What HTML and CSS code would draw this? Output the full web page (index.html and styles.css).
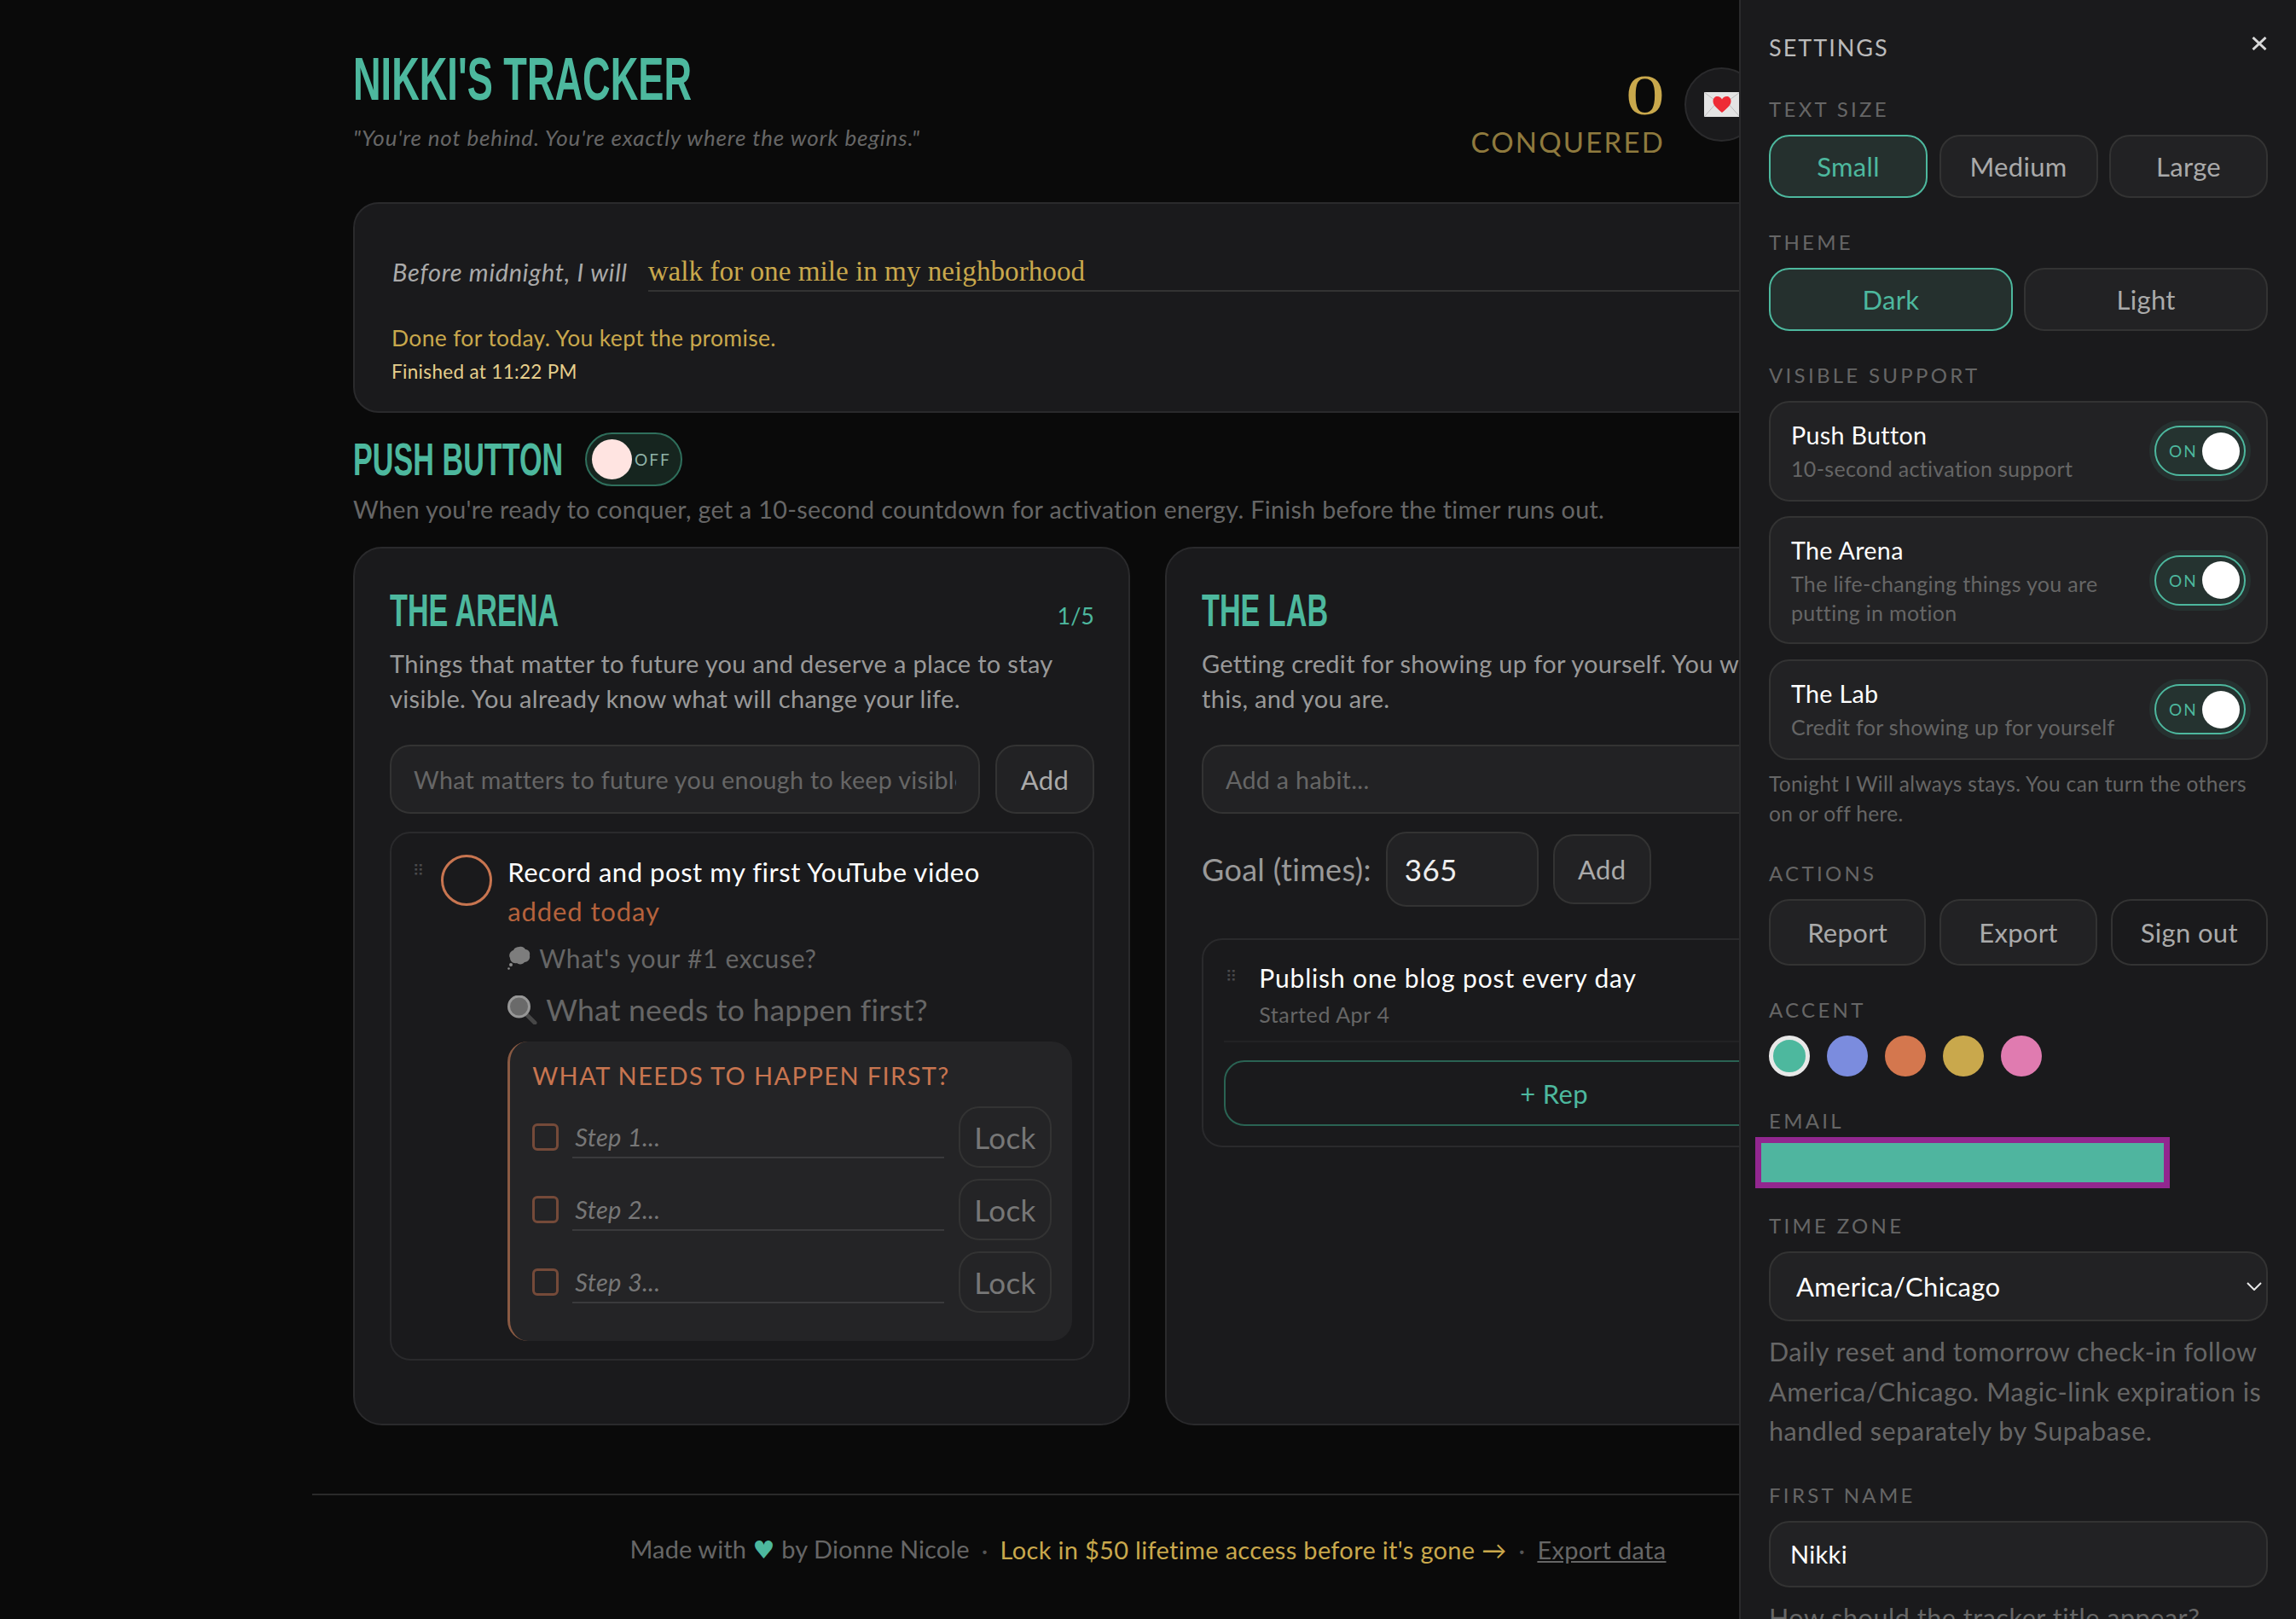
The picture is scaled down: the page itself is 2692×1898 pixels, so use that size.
FILE: index.html
```html
<!DOCTYPE html>
<html lang="en">
<head>
    <meta charset="UTF-8">
    <title>Nikki's Tracker</title>
    <link rel="stylesheet" href="styles.css">
</head>
<body>
    <div class="page">
        <header class="header">
            <div class="brand">
                <h1 class="title">NIKKI'S TRACKER</h1>
                <p class="quote">"You're not behind. You're exactly where the work begins."</p>
            </div>
            <div class="header-right">
                <div class="count">
                    <div class="count-num"><span>0</span></div>
                    <div class="count-label">CONQUERED</div>
                </div>
                <button class="letter-btn" aria-label="Letter">
                    <svg width="42" height="29" viewBox="0 0 42 29">
                        <rect width="42" height="29" rx="1" fill="#e4e4e4"/>
                        <path d="M0 0L21 16L42 0M0 29L15 12M42 29L27 12" fill="none" stroke="#bdbdbd" stroke-width="1"/>
                        <path d="M21 24C14 18 10.500 15 10.500 10.500C10.500 7 13 5 15.500 5C18 5 20 6.500 21 8.500C22 6.500 24 5 26.500 5C29 5 31.500 7 31.500 10.500C31.500 15 28 18 21 24Z" fill="#ee2b35"/>
                    </svg>
                </button>
            </div>
        </header>

        <section class="promise">
            <div class="promise-row">
                <span class="promise-lead">Before midnight, I will</span>
                <span class="promise-text">walk for one mile in my neighborhood</span>
            </div>
            <p class="promise-done">Done for today. You kept the promise.</p>
            <p class="promise-time">Finished at 11:22 PM</p>
        </section>

        <div class="push-head">
            <h2 class="heading">PUSH BUTTON</h2>
            <div class="push-toggle"><span class="push-knob"></span><span class="push-off">OFF</span></div>
        </div>
        <p class="push-desc">When you're ready to conquer, get a 10-second countdown for activation energy. Finish before the timer runs out.</p>

        <div class="columns">
            <section class="card">
                <div class="card-head">
                    <h2 class="heading">THE ARENA</h2>
                    <span class="card-count">1/5</span>
                </div>
                <p class="card-desc">Things that matter to future you and deserve a place to stay visible. You already know what will change your life.</p>
                <div class="add-row">
                    <input class="field" type="text" placeholder="What matters to future you enough to keep visible?">
                    <button class="btn add-btn">Add</button>
                </div>
                <div class="task">
                    <span class="drag">⠿</span>
                    <span class="task-circle"></span>
                    <div class="task-body">
                        <div class="task-title">Record and post my first YouTube video</div>
                        <div class="task-age">added today</div>
                        <div class="task-prompt">
                            <svg class="prompt-icon" width="27" height="28" viewBox="0 0 27 28">
                                <path d="M14 1C17 0 20 2 21 4C25 4 27 8 26 11C27 15 24 19 20 19C18 22 13 22 11 20C7 21 3 18 3 14C1 11 3 6 7 5C8 2 11 1 14 1Z" fill="#7d7d7d"/>
                                <circle cx="4" cy="22" r="2" fill="#8a8a8a"/>
                                <circle cx="1.500" cy="26.500" r="1.300" fill="#8a8a8a"/>
                            </svg>
                            What's your #1 excuse?
                        </div>
                        <div class="task-prompt task-prompt-big">
                            <svg class="prompt-icon" width="35" height="34" viewBox="0 0 35 34">
                                <path d="M21 21L32 32" stroke="#474747" stroke-width="5" stroke-linecap="round"/>
                                <circle cx="13.500" cy="13" r="12" fill="#6a6a6a" stroke="#979797" stroke-width="3"/>
                            </svg>
                            What needs to happen first?
                        </div>
                        <div class="steps">
                            <div class="steps-title">WHAT NEEDS TO HAPPEN FIRST?</div>
                            <div class="step">
                                <span class="step-check"></span>
                                <input class="step-input" type="text" placeholder="Step 1...">
                                <button class="btn lock-btn">Lock</button>
                            </div>
                            <div class="step">
                                <span class="step-check"></span>
                                <input class="step-input" type="text" placeholder="Step 2...">
                                <button class="btn lock-btn">Lock</button>
                            </div>
                            <div class="step">
                                <span class="step-check"></span>
                                <input class="step-input" type="text" placeholder="Step 3...">
                                <button class="btn lock-btn">Lock</button>
                            </div>
                        </div>
                    </div>
                </div>
            </section>

            <section class="card">
                <div class="card-head">
                    <h2 class="heading">THE LAB</h2>
                </div>
                <p class="card-desc">Getting credit for showing up for yourself. You want to do<br>this, and you are.</p>
                <div class="add-row">
                    <input class="field" type="text" placeholder="Add a habit...">
                </div>
                <div class="goal-row">
                    <label class="goal-label">Goal (times):</label>
                    <input class="field goal-input" type="text" value="365">
                    <button class="btn goal-add">Add</button>
                </div>
                <div class="habit">
                    <div class="habit-head">
                        <span class="drag">⠿</span>
                        <div>
                            <div class="habit-title">Publish one blog post every day</div>
                            <div class="habit-sub">Started Apr 4</div>
                        </div>
                    </div>
                    <div class="habit-line"></div>
                    <button class="rep-btn">+ Rep</button>
                </div>
            </section>
        </div>

        <footer class="footer">
            <span class="footer-made">Made with <span class="heart">♥</span> by Dionne Nicole</span>
            <span class="sep">·</span>
            <a class="footer-gold">Lock in $50 lifetime access before it's gone →</a>
            <span class="sep">·</span>
            <a class="footer-link">Export data</a>
        </footer>
    </div>

    <aside class="panel">
        <div class="panel-head">
            <span class="panel-title">SETTINGS</span>
            <svg class="panel-close" width="18" height="16" viewBox="0 0 18 16">
                <path d="M1.500 1L16.500 15M16.500 1L1.500 15" stroke="#d8d8d8" stroke-width="3" fill="none"/>
            </svg>
        </div>

        <div class="section">
            <div class="label">TEXT SIZE</div>
            <div class="opts">
                <button class="opt opt-on">Small</button>
                <button class="opt">Medium</button>
                <button class="opt">Large</button>
            </div>
        </div>

        <div class="section">
            <div class="label">THEME</div>
            <div class="opts">
                <button class="opt opt-on">Dark</button>
                <button class="opt">Light</button>
            </div>
        </div>

        <div class="section">
            <div class="label">VISIBLE SUPPORT</div>
            <div class="support">
                <div class="support-text">
                    <div class="support-title">Push Button</div>
                    <div class="support-sub">10-second activation support</div>
                </div>
                <div class="switch"><span class="switch-on">ON</span><span class="switch-knob"></span></div>
            </div>
            <div class="support">
                <div class="support-text">
                    <div class="support-title">The Arena</div>
                    <div class="support-sub">The life-changing things you are putting in motion</div>
                </div>
                <div class="switch"><span class="switch-on">ON</span><span class="switch-knob"></span></div>
            </div>
            <div class="support">
                <div class="support-text">
                    <div class="support-title">The Lab</div>
                    <div class="support-sub">Credit for showing up for yourself</div>
                </div>
                <div class="switch"><span class="switch-on">ON</span><span class="switch-knob"></span></div>
            </div>
            <p class="support-note">Tonight I Will always stays. You can turn the others on or off here.</p>
        </div>

        <div class="section actions-section">
            <div class="label">ACTIONS</div>
            <div class="actions">
                <button class="action">Report</button>
                <button class="action">Export</button>
                <button class="action action-dark">Sign out</button>
            </div>
        </div>

        <div class="section">
            <div class="label">ACCENT</div>
            <div class="swatches">
                <span class="swatch swatch-on swatch-teal"></span>
                <span class="swatch swatch-blue"></span>
                <span class="swatch swatch-orange"></span>
                <span class="swatch swatch-gold"></span>
                <span class="swatch swatch-pink"></span>
            </div>
        </div>

        <div class="section">
            <div class="label email-label">EMAIL</div>
            <div class="email-mask"></div>
        </div>

        <div class="section zone-section">
            <div class="label">TIME ZONE</div>
            <div class="select-wrap">
                <select class="select"><option>America/Chicago</option></select>
                <svg class="select-arrow" width="18" height="10" viewBox="0 0 18 10">
                    <path d="M1 1L9 9L17 1" stroke="#e8e8e8" stroke-width="2" fill="none"/>
                </svg>
            </div>
            <p class="zone-note">Daily reset and tomorrow check-in follow America/Chicago. Magic-link expiration is handled separately by Supabase.</p>
        </div>

        <div class="section">
            <div class="label">FIRST NAME</div>
            <input class="name-input" type="text" value="Nikki">
            <p class="name-hint">How should the tracker title appear?</p>
        </div>
    </aside>
</body>
</html>
```

FILE: styles.css
```css
*{
    box-sizing: border-box;
}
html,body{
    margin: 0;
    padding: 0;
    height: 100%;
    overflow: hidden;
}
body{
    background-color: #0a0a0a;
    color: #fff;
    font-family: 'Lato', 'Noto Sans', sans-serif;
    letter-spacing: 0.02em;
}
p{
    margin: 0;
}
button,input,select{
    font-family: inherit;
    letter-spacing: inherit;
}
.page{
    width: 1960px;
    margin: 0 auto;
    padding: 58px 48px 0;
}

/* header */
.header{
    display: flex;
    justify-content: space-between;
    height: 179px;
}
.title{
    margin: 0;
    font-family: 'Liberation Sans', sans-serif;
    font-size: 70px;
    line-height: 70px;
    font-weight: 700;
    letter-spacing: 0;
    color: #4db89e;
    white-space: nowrap;
    transform: scaleX(0.645);
    transform-origin: left center;
}
.quote{
    margin-top: 16px;
    font-size: 26px;
    line-height: 34px;
    letter-spacing: 0.85px;
    font-style: italic;
    color: #666;
}
.header-right{
    display: flex;
    align-items: flex-start;
    gap: 23px;
    margin-right: 216px;
    padding-top: 21px;
}
.count{
    text-align: right;
    padding-top: 2px;
}
.count-num{
    font-family: 'Liberation Serif', serif;
    font-size: 68px;
    line-height: 60px;
    color: #c9a84c;
}
.count-num span{
    display: inline-block;
    transform: scaleX(1.35);
    transform-origin: right center;
}
.count-label{
    margin-top: 5px;
    font-size: 33px;
    line-height: 40px;
    letter-spacing: 2.200px;
    color: #8f7a3e;
}
.letter-btn{
    width: 87px;
    height: 87px;
    padding: 0;
    border-radius: 50%;
    background-color: #1a1a1c;
    border: 2px solid #2a2a2c;
    display: flex;
    align-items: center;
    justify-content: center;
}

/* tonight card */
.promise{
    height: 247px;
    padding: 56px 44px 0;
    background-color: #1a1a1c;
    border: 2px solid #2a2a2c;
    border-radius: 30px;
}
.promise-row{
    display: flex;
    align-items: center;
    gap: 24px;
}
.promise-lead{
    font-size: 29px;
    letter-spacing: 0.7px;
    font-style: italic;
    color: #aaa;
}
.promise-text{
    flex: 1;
    height: 47px;
    line-height: 45px;
    font-family: 'Liberation Serif', serif;
    font-size: 33.200px;
    letter-spacing: 0;
    color: #c9a84c;
    border-bottom: 2px solid #333;
}
.promise-done{
    margin-top: 36px;
    margin-left: -1px;
    font-size: 26.500px;
    line-height: 36px;
    color: #c9a84c;
}
.promise-time{
    margin-top: 5px;
    margin-left: -1px;
    font-size: 22.500px;
    line-height: 34px;
    color: #e6cf8c;
}

/* push button */
.push-head{
    display: flex;
    align-items: center;
    gap: 27px;
    margin-top: 23px;
}
.heading{
    margin: 0;
    font-family: 'Liberation Sans', sans-serif;
    font-size: 53px;
    line-height: 50px;
    font-weight: 700;
    letter-spacing: 0;
    color: #4db89e;
    white-space: nowrap;
    transform: scaleX(0.645);
    transform-origin: left center;
}
.push-head .heading{
    width: 245px;
}
.push-toggle{
    display: flex;
    align-items: center;
    gap: 3px;
    width: 114px;
    height: 63px;
    padding-left: 6px;
    background-color: #16251f;
    border: 2px solid #2f6f5c;
    border-radius: 32px;
}
.push-knob{
    width: 47px;
    height: 47px;
    border-radius: 50%;
    background-color: #ffe4e1;
}
.push-off{
    font-size: 19px;
    letter-spacing: 2px;
    color: #8fb3a8;
}
.push-desc{
    margin-top: 8px;
    font-size: 28.700px;
    line-height: 38px;
    color: #666;
}

/* columns */
.columns{
    display: grid;
    grid-template-columns: 911px 911px;
    gap: 41px;
    margin-top: 25px;
    height: 1030px;
}
.card{
    padding: 46px 40px 0 41px;
    background-color: #1a1a1c;
    border: 2px solid #2a2a2c;
    border-radius: 34px;
}
.card-head{
    display: flex;
    justify-content: space-between;
    align-items: center;
    height: 53px;
}
.card-count{
    padding-top: 12px;
    font-size: 27px;
    letter-spacing: 0;
    color: #4db89e;
}
.card-desc{
    margin-top: 15px;
    font-size: 29px;
    line-height: 41px;
    color: #999;
}
.add-row{
    display: flex;
    gap: 18px;
    margin-top: 34px;
}
.field{
    flex: 1;
    min-width: 0;
    height: 81px;
    padding: 0 26px;
    font-size: 28.700px;
    color: #eee;
    background-color: #222224;
    border: 2px solid #333;
    border-radius: 24px;
}
.field::placeholder{
    color: #666;
}
.btn{
    background-color: #222224;
    border: 2px solid #333;
    border-radius: 24px;
    color: #aaa;
    padding: 0;
}
.add-btn{
    width: 116px;
    height: 81px;
    font-size: 31px;
}

/* arena task */
.task{
    display: flex;
    margin-top: 21px;
    height: 620px;
    padding: 25px 24px 0 25px;
    border: 2px solid #2a2a2c;
    border-radius: 24px;
}
.drag{
    margin-top: 8px;
    font-family: 'DejaVu Sans', sans-serif;
    font-size: 18px;
    line-height: 22px;
    letter-spacing: 0;
    color: #4a4a4c;
}
.task-circle{
    flex: none;
    width: 60px;
    height: 60px;
    margin: 0 18px 0 20px;
    border: 3px solid #c87550;
    border-radius: 50%;
}
.task-body{
    flex: 1;
}
.task-title{
    font-size: 31px;
    line-height: 40px;
    letter-spacing: 0.55px;
}
.task-age{
    margin-top: 6px;
    font-size: 31px;
    line-height: 40px;
    letter-spacing: 0.9px;
    color: #b5623c;
}
.task-prompt{
    display: flex;
    align-items: center;
    gap: 10px;
    margin-top: 15px;
    font-size: 30px;
    line-height: 40px;
    letter-spacing: 0.67px;
    color: #666;
}
.task-prompt-big{
    margin-top: 18px;
    font-size: 35.500px;
    line-height: 46px;
    letter-spacing: 0.22px;
}
.steps{
    height: 351px;
    margin-top: 14px;
    padding: 22px 24px 0 26px;
    background-color: #242426;
    border-left: 3px solid #8a5a43;
    border-radius: 24px;
}
.steps-title{
    font-size: 29px;
    line-height: 36px;
    letter-spacing: 1.400px;
    color: #c87550;
    margin-bottom: 18px;
}
.step{
    display: flex;
    align-items: center;
    height: 72px;
    margin-bottom: 13px;
}
.step-check{
    flex: none;
    width: 31px;
    height: 32px;
    margin-right: 16px;
    border: 3px solid #754a39;
    border-radius: 6px;
}
.step-input{
    flex: 1;
    min-width: 0;
    height: 50px;
    margin-right: 17px;
    padding: 0 3px;
    font-size: 29px;
    font-style: italic;
    color: #eee;
    background: none;
    border: none;
    border-bottom: 2px solid #3a3a3c;
}
.step-input::placeholder{
    color: #777;
}
.lock-btn{
    flex: none;
    width: 109px;
    height: 72px;
    font-size: 35px;
    color: #777;
    background: none;
}

/* lab */
.goal-row{
    display: flex;
    align-items: center;
    gap: 17px;
    height: 88px;
    margin-top: 21px;
}
.goal-label{
    font-size: 36px;
    color: #999;
}
.goal-input{
    flex: none;
    width: 179px;
    height: 88px;
    padding: 0 20px;
    font-size: 35px;
}
.goal-add{
    width: 115px;
    height: 82px;
    font-size: 31px;
}
.habit{
    height: 245px;
    margin-top: 37px;
    padding: 24px 24px 0;
    border: 2px solid #2a2a2c;
    border-radius: 24px;
}
.habit-head{
    display: flex;
    gap: 26px;
    padding-left: 2px;
}
.habit-title{
    font-size: 30px;
    line-height: 40px;
    letter-spacing: 0.85px;
}
.habit-sub{
    margin-top: 7px;
    font-size: 25px;
    line-height: 32px;
    letter-spacing: 0.6px;
    color: #666;
}
.habit-line{
    height: 2px;
    margin-top: 15px;
    background-color: #222224;
}
.rep-btn{
    display: block;
    width: 100%;
    height: 77px;
    margin-top: 21px;
    font-size: 31px;
    color: #4db89e;
    background: none;
    border: 2px solid #2a6353;
    border-radius: 24px;
}

/* footer */
.footer{
    display: flex;
    justify-content: center;
    align-items: center;
    gap: 14px;
    width: 1960px;
    margin: 80px -48px 0;
    height: 128px;
    border-top: 2px solid #2a2a2a;
    font-size: 29px;
    color: #666;
}
.footer-made{
    letter-spacing: 0.1px;
}
.heart{
    font-family: 'DejaVu Sans', sans-serif;
    color: #4db89e;
}
.sep{
    color: #555;
}
.footer-gold{
    color: #c9a84c;
}
.footer-link{
    text-decoration: underline;
}

/* settings panel */
.panel{
    position: fixed;
    top: 0;
    right: 0;
    bottom: 0;
    width: 653px;
    padding: 40px 33px 0;
    background-color: #1a1a1c;
    border-left: 2px solid #2a2a2c;
    overflow: hidden;
}
.panel-head{
    display: flex;
    justify-content: space-between;
    align-items: flex-start;
    height: 32px;
}
.panel-title{
    font-size: 27px;
    line-height: 32px;
    letter-spacing: 2px;
    color: #bbb;
}
.panel-close{
    margin-top: 3px;
    margin-right: 1px;
}
.section{
    margin-top: 37.500px;
}
.panel-head + .section{
    margin-top: 41px;
}
.label{
    height: 30px;
    margin-bottom: 14.500px;
    font-size: 24px;
    line-height: 30px;
    letter-spacing: 3.300px;
    color: #666;
}
.opts{
    display: flex;
    gap: 13.500px;
}
.opt{
    flex: 1;
    height: 74px;
    padding: 0;
    font-size: 31px;
    color: #aaa;
    background-color: #222224;
    border: 2px solid #333;
    border-radius: 24px;
}
.opt-on{
    color: #4db89e;
    background-color: #25302e;
    border: 2px solid #4db89e;
}
.support{
    display: flex;
    align-items: center;
    justify-content: space-between;
    min-height: 118px;
    margin-bottom: 17.500px;
    padding: 0 24px;
    background-color: #222224;
    border: 2px solid #333;
    border-radius: 24px;
}
.support-text{
    width: 380px;
    padding: 18px 0;
}
.support-title{
    font-size: 28.700px;
    line-height: 40px;
}
.support-sub{
    margin-top: 3px;
    font-size: 25px;
    line-height: 33.500px;
    color: #666;
}
.switch{
    display: flex;
    align-items: center;
    justify-content: space-between;
    width: 107px;
    height: 59px;
    padding: 0 5px 0 15px;
    background-color: #253330;
    border: 2px solid #4db89e;
    border-radius: 30px;
    box-shadow: 0 0 0 6px rgba(77,184,158,0.1);
}
.switch-on{
    font-size: 19px;
    letter-spacing: 2px;
    color: #4db89e;
}
.switch-knob{
    width: 44px;
    height: 44px;
    border-radius: 50%;
    background-color: #fff;
}
.support-note{
    margin-top: -7.500px;
    font-size: 24.500px;
    line-height: 35px;
    color: #666;
}
.actions-section{
    margin-top: 38.500px;
}
.actions{
    display: flex;
    gap: 16px;
}
.action{
    flex: 1;
    height: 78px;
    padding: 0;
    font-size: 31px;
    color: #aaa;
    background-color: #222224;
    border: 2px solid #333;
    border-radius: 24px;
}
.action-dark{
    background-color: #1a1a1c;
}
.swatches{
    display: flex;
    gap: 20px;
}
.swatch{
    width: 48px;
    height: 48px;
    border-radius: 50%;
}
.swatch-on{
    border: 5px solid #e8e8e8;
}
.swatch-teal{ background-color: #4db89e; }
.swatch-blue{ background-color: #7b8cde; }
.swatch-orange{ background-color: #d4774e; }
.swatch-gold{ background-color: #c9a84c; }
.swatch-pink{ background-color: #e07bb0; }
.email-label{
    margin-bottom: 4px;
}
.email-mask{
    width: 486px;
    height: 60px;
    margin-left: -16px;
    background-color: #4fb59f;
    border: 7px solid #92278f;
}
.zone-section{
    margin-top: 29px;
}
.select-wrap{
    position: relative;
}
.select{
    width: 100%;
    height: 82px;
    padding: 0 0 0 30px;
    font-size: 31px;
    color: #fff;
    background-color: #222224;
    border: 2px solid #333;
    border-radius: 24px;
    appearance: none;
}
.select-arrow{
    position: absolute;
    right: 7px;
    top: 36px;
}
.zone-note{
    margin-top: 12.500px;
    font-size: 30.500px;
    line-height: 46.500px;
    letter-spacing: 0.55px;
    color: #666;
}
.name-input{
    display: block;
    width: 100%;
    height: 78px;
    padding: 0 23px;
    font-size: 29px;
    color: #fff;
    background-color: #222224;
    border: 2px solid #333;
    border-radius: 24px;
}
.name-hint{
    margin-top: 15px;
    font-size: 30.500px;
    line-height: 40px;
    letter-spacing: 0.55px;
    white-space: nowrap;
    color: #666;
}
```
